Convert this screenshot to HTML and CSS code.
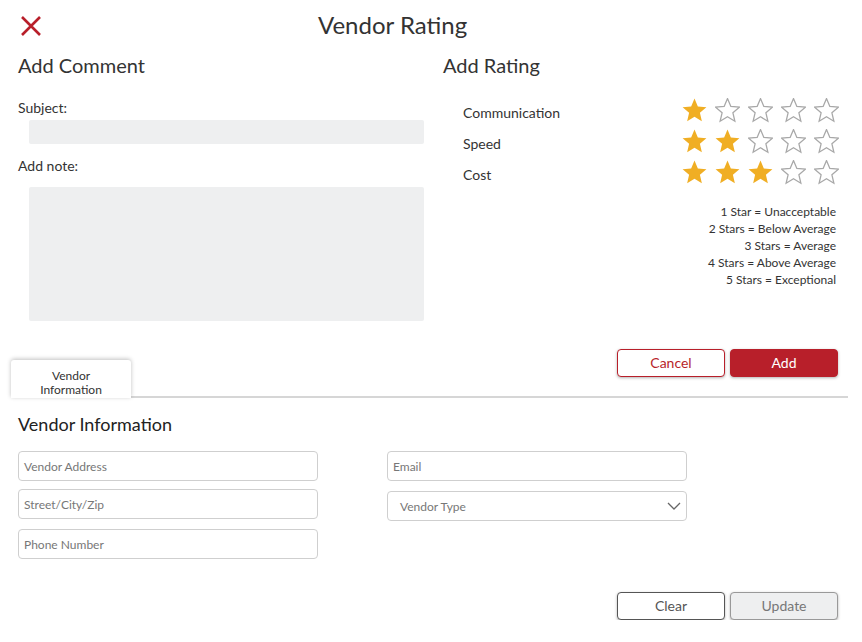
FILE: index.html
```html
<!DOCTYPE html>
<html>
<head>
<meta charset="utf-8">
<link rel="stylesheet" href="styles.css">
</head>
<body>
<div class="header">
  <svg class="close" width="22" height="20" viewBox="0 0 22 20"><path d="M2 1L20 19M20 1L2 19" stroke="#b81f2a" stroke-width="2.6" fill="none"/></svg>
  <div class="title">Vendor Rating</div>
</div>
<div class="top">
  <div class="col-left">
    <h2 class="h2">Add Comment</h2>
    <div class="label label-subject">Subject:</div>
    <div class="field-subject"></div>
    <div class="label label-note">Add note:</div>
    <div class="field-note"></div>
  </div>
  <div class="col-right">
    <h2 class="h2">Add Rating</h2>
    <div class="rows">
      <div class="row"><span class="rlabel">Communication</span><span class="stars" data-n="1"></span></div>
      <div class="row"><span class="rlabel">Speed</span><span class="stars" data-n="2"></span></div>
      <div class="row"><span class="rlabel">Cost</span><span class="stars" data-n="3"></span></div>
    </div>
    <div class="legend">
      <div>1 Star = Unacceptable</div>
      <div>2 Stars = Below Average</div>
      <div>3 Stars = Average</div>
      <div>4 Stars = Above Average</div>
      <div>5 Stars = Exceptional</div>
    </div>
    <div class="btns">
      <button class="btn btn-outline">Cancel</button>
      <button class="btn btn-primary">Add</button>
    </div>
  </div>
</div>
<div class="tabs">
  <div class="tab">Vendor<br>Information</div>
  <div class="tabline"></div>
</div>
<div class="vi">
  <h3 class="h3">Vendor Information</h3>
  <div class="form">
    <div class="fcol">
      <div class="input">Vendor Address</div>
      <div class="input">Street/City/Zip</div>
      <div class="input input-gap">Phone Number</div>
    </div>
    <div class="fcol">
      <div class="input">Email</div>
      <div class="input select input-gap">Vendor Type
        <svg class="chev" width="14" height="8" viewBox="0 0 14 8"><path d="M1 1l6 6 6-6" stroke="#666" stroke-width="1.3" fill="none"/></svg>
      </div>
    </div>
  </div>
  <div class="btns btns-bottom">
    <button class="btn btn-clear">Clear</button>
    <button class="btn btn-disabled">Update</button>
  </div>
</div>
<script>
(function(){
  var star = 'M12 17.27L18.18 21l-1.64-7.03L22 9.24l-7.19-.61L12 2 9.19 8.63 2 9.24l5.46 4.73L5.82 21z';
  var els = document.querySelectorAll('.stars');
  for (var i = 0; i < els.length; i++) {
    var n = +els[i].getAttribute('data-n');
    var h = '';
    for (var k = 0; k < 5; k++) {
      if (k < n) h += '<svg class="star" width="25" height="25" viewBox="1.5 1.5 21 21"><path d="' + star + '" fill="#f0ae24"/></svg>';
      else h += '<svg class="star" width="25" height="25" viewBox="1.5 1.5 21 21"><path d="' + star + '" fill="#fff" stroke="#a8a8a8" stroke-width="1.1" stroke-linejoin="miter"/></svg>';
    }
    els[i].innerHTML = h;
  }
})();
</script>
</body>
</html>
```
FILE: styles.css
```css
* { box-sizing: border-box; }
body {
  margin: 0;
  font-family: Lato, "Open Sans", sans-serif;
  color: #333;
  background: #fff;
  width: 862px;
}
.header {
  height: 50px;
  display: flex;
  align-items: center;
  padding-left: 20px;
}
.close { display: block; margin-top: 1px; }
.title {
  margin-left: 276px;
  font-size: 24px;
  color: #333;
  line-height: 30px;
}
.top {
  display: flex;
  padding: 0 24px 0 18px;
  gap: 19px;
}
.col-left { width: 406px; }
.col-right { flex: 1; }
.h2 {
  margin: 3px 0 0;
  font-size: 20px;
  font-weight: 400;
  line-height: 24px;
  color: #333;
}
.label {
  font-size: 14px;
  line-height: 18px;
  color: #333;
}
.label-subject { margin-top: 22px; }
.label-note { margin-top: 13px; }
.field-subject {
  margin: 3px 0 0 11px;
  height: 24px;
  background: #eeeff0;
  border-radius: 2px;
}
.field-note {
  margin: 12px 0 0 11px;
  height: 134px;
  background: #eeeff0;
  border-radius: 2px;
}
.rows { margin-top: 18px; }
.row {
  height: 31px;
  display: flex;
  align-items: center;
  justify-content: space-between;
  padding-left: 20px;
}
.rlabel { font-size: 14px; color: #333; margin-top: 3px; }
.stars { display: flex; gap: 8px; margin-right: -1px; }
.star { display: block; }
.legend {
  margin-top: 15px;
  text-align: right;
  font-size: 12px;
  line-height: 17px;
  color: #333;
  padding-right: 2px;
}
.btns {
  display: flex;
  justify-content: flex-end;
  gap: 5px;
  margin-top: 61px;
}
.btn {
  width: 108px;
  height: 28px;
  border-radius: 4px;
  font-family: Lato, "Open Sans", sans-serif;
  font-size: 14px;
  padding: 0 0 1px;
  box-shadow: 0 1px 3px rgba(0,0,0,0.3);
}
.btn-outline {
  background: #fff;
  border: 1px solid #b81f2a;
  color: #b81f2a;
}
.btn-primary {
  background: #b81f2a;
  border: 1px solid #b81f2a;
  color: #fff;
}
.tabs {
  display: flex;
  align-items: flex-end;
  margin-top: -17px;
  padding-left: 11px;
  margin-right: 14px;
}
.tab {
  width: 120px;
  height: 38px;
  padding-top: 9px;
  text-align: center;
  font-size: 12px;
  line-height: 14px;
  color: #333;
  background: #fff;
  border-radius: 3px 3px 0 0;
  box-shadow: 0 -1px 4px rgba(0,0,0,0.25);
  position: relative;
  z-index: 1;
}
.tabline {
  flex: 1;
  height: 2px;
  background: #d6d6d6;
}
.vi { padding: 0 24px 0 18px; }
.h3 {
  margin: 15px 0 0;
  font-size: 18px;
  font-weight: 400;
  line-height: 22px;
  color: #222;
}
.form {
  display: flex;
  gap: 69px;
  margin-top: 16px;
}
.fcol {
  width: 300px;
  display: flex;
  flex-direction: column;
  gap: 8px;
}
.input {
  height: 30px;
  border: 1px solid #cfcfcf;
  border-radius: 4px;
  padding-left: 5px;
  font-size: 12px;
  color: #777;
  display: flex;
  align-items: center;
}
.input-gap { margin-top: 2px; }
.select {
  padding-left: 12px;
  justify-content: space-between;
  padding-right: 5px;
}
.chev { display: block; }
.btns-bottom { margin-top: 33px; }
.btn-clear {
  background: #fff;
  border: 1px solid #555;
  color: #555;
}
.btn-disabled {
  background: #eeeff0;
  border: 1px solid #999;
  color: #777;
}
```
